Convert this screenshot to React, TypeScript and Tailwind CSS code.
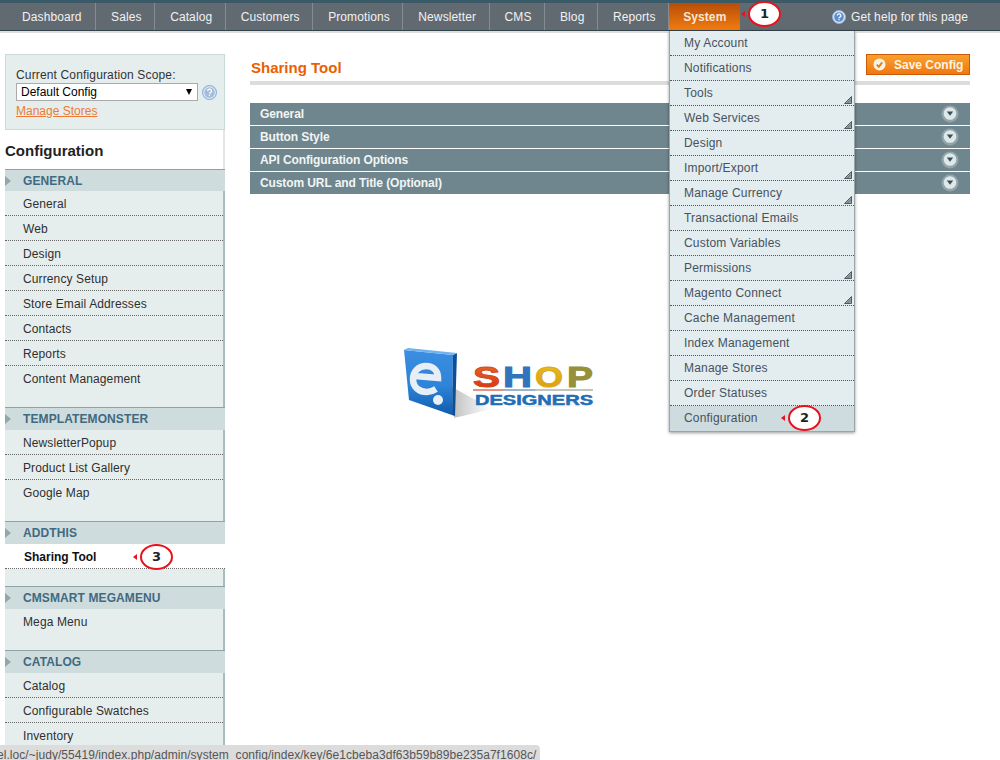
const navItems = ["Dashboard", "Sales", "Catalog", "Customers", "Promotions", "Newsletter", "CMS", "Blog", "Reports"];

const menuItems = [
  { label: "My Account" },
  { label: "Notifications" },
  { label: "Tools", sub: true },
  { label: "Web Services", sub: true },
  { label: "Design" },
  { label: "Import/Export", sub: true },
  { label: "Manage Currency", sub: true },
  { label: "Transactional Emails" },
  { label: "Custom Variables" },
  { label: "Permissions", sub: true },
  { label: "Magento Connect", sub: true },
  { label: "Cache Management" },
  { label: "Index Management" },
  { label: "Manage Stores" },
  { label: "Order Statuses" },
];

const panels = ["General", "Button Style", "API Configuration Options", "Custom URL and Title (Optional)"];

function HelpIcon({ size = 14, fill = "#6f9bd2" }: { size?: number; fill?: string }) {
  return (
    <svg width={size} height={size} viewBox="0 0 14 14" className="shrink-0">
      <circle cx="7" cy="7" r="6.5" fill="#dbe6f4" stroke="#8fb0d8" />
      <circle cx="7" cy="7" r="4.8" fill={fill} />
      <path d="M5.3 5.6a1.8 1.7 0 1 1 2.6 1.5c-.6.3-.9.6-.9 1.1" fill="none" stroke="#fff" strokeWidth="1.2" />
      <rect x="6.4" y="9" width="1.2" height="1.2" fill="#fff" />
    </svg>
  );
}

function Callout({ n, className }: { n: number; className: string }) {
  return (
    <div className={`absolute flex items-center ${className}`}>
      <span className="h-0 w-0 border-y-[3px] border-r-[4px] border-y-transparent border-r-[#e8121c]" />
      <span className="ml-[3px] flex h-[26px] w-[33px] items-center justify-center rounded-[50%] border-2 border-[#e8121c] bg-white text-[13px] font-bold text-[#222] font-['DejaVu_Sans',sans-serif]">
        {n}
      </span>
    </div>
  );
}

function SectionHead({ title, short }: { title: string; short?: boolean }) {
  return (
    <div
      className={`flex items-center border-t border-[#8ea3a8] bg-[#cfdcdd] text-xs font-bold tracking-[0.1px] text-[#3f6a80] ${
        short ? "h-[22px]" : "h-[23px]"
      }`}
    >
      <span className="h-0 w-0 border-y-[5px] border-l-[6px] border-y-transparent border-l-[#8fa8aa]" />
      <span className="ml-3">{title}</span>
    </div>
  );
}

function SideGroup({ title, items, filler, short }: { title: string; items: string[]; filler: string; short?: boolean }) {
  return (
    <div>
      <SectionHead title={title} short={short} />
      <div className="border-r-2 border-[#a9bcbd] bg-[#e6eeed] tracking-[0.12px]">
        {items.map((item, i) => (
          <div
            key={item}
            className={`flex h-[25px] items-center pl-[18px] pt-px text-[#2f2f2f] ${
              i === items.length - 1 ? "" : "border-b border-dotted border-[#666]"
            }`}
          >
            {item}
          </div>
        ))}
        <div className={filler} />
      </div>
    </div>
  );
}

function Logo() {
  return (
    <svg width="204" height="75" viewBox="0 0 204 75">
      <defs>
        <linearGradient id="cube" x1="0" y1="0" x2="0" y2="1">
          <stop offset="0" stopColor="#3c8ee2" />
          <stop offset="0.55" stopColor="#2d84d8" />
          <stop offset="1" stopColor="#0d5cae" />
        </linearGradient>
        <linearGradient id="shade" x1="0" y1="0" x2="1" y2="0">
          <stop offset="0" stopColor="#888" stopOpacity="0.55" />
          <stop offset="1" stopColor="#999" stopOpacity="0" />
        </linearGradient>
        <linearGradient id="letterS" x1="0" y1="0" x2="0" y2="1">
          <stop offset="0" stopColor="#e8702c" />
          <stop offset="1" stopColor="#d42c14" />
        </linearGradient>
        <linearGradient id="letterO" x1="0" y1="0" x2="0" y2="1">
          <stop offset="0" stopColor="#e8c02a" />
          <stop offset="1" stopColor="#d89a10" />
        </linearGradient>
      </defs>
      <path d="M52 42 L92 64 L54 73 Z" fill="url(#shade)" />
      <path d="M4 5 L53 10 L52 70 L9 55 Z" fill="url(#cube)" />
      <path d="M53 10 L57 8 L55 71 L52 70 Z" fill="#0c4f96" />
      <path d="M4 5 L8 3 L57 8 L53 10 Z" fill="#6fb2ee" />
      <path
        d="M15 31 L38 33 C38 25 33 21 26 21 C18 21 13 27 13 34 C13 43 20 47 27 47 C30 47 33 46 36 44"
        fill="none"
        stroke="#e8eef6"
        strokeWidth="6.5"
      />
      <circle cx="38" cy="55" r="5" fill="#e8eef6" />
      <g fontFamily="'Liberation Sans',Arial,sans-serif" fontWeight="700">
        <text x="73" y="42" fontSize="30" fill="url(#letterS)" stroke="#d8481c" strokeWidth="1" textLength="27" lengthAdjust="spacingAndGlyphs">S</text>
        <text x="103" y="42" fontSize="30" fill="#3274bc" stroke="#3274bc" strokeWidth="1" textLength="29" lengthAdjust="spacingAndGlyphs">H</text>
        <text x="135" y="42" fontSize="30" fill="url(#letterO)" stroke="#dcaa18" strokeWidth="1" textLength="28" lengthAdjust="spacingAndGlyphs">O</text>
        <text x="167" y="42" fontSize="30" fill="#96903a" stroke="#96903a" strokeWidth="1" textLength="26" lengthAdjust="spacingAndGlyphs">P</text>
        <text x="75" y="60" fontSize="14" fill="#1f6db6" stroke="#1f6db6" strokeWidth="0.5" textLength="118" lengthAdjust="spacingAndGlyphs">DESIGNERS</text>
      </g>
      <path d="M73 45 H104" stroke="#c9502c" strokeWidth="1.2" />
      <path d="M104 45 H135" stroke="#5c7fa8" strokeWidth="1.2" />
      <path d="M135 45 H193" stroke="#8a8a80" strokeWidth="1.2" />
      <path d="M118 62 L196 62 L204 54 L193 54 Z" fill="url(#shade)" opacity="0.35" />
    </svg>
  );
}

export default function App() {
  return (
    <div className="relative h-[760px] w-[1000px] overflow-hidden bg-white font-['Liberation_Sans',Arial,sans-serif] text-xs">
      <header className="h-[33px] border-b-2 border-[#dcdedd] bg-[#2f3f48]">
        <div className="flex h-[31px] items-stretch border-t-[3px] border-b border-t-[#3b5a68] border-b-[#33434b] bg-[#626a71] pl-[8px] tracking-[0.1px] text-[#f0f2f2]">
          {navItems.map((item, i) => (
            <div key={item} className={`flex items-center border-r border-[#858b90] ${i === 0 ? "pl-[14px] pr-[13.5px]" : "pl-[15px] pr-[12.5px]"}`}>
              {item}
            </div>
          ))}
          <div className="flex w-[71px] items-center bg-gradient-to-b from-[#b84d08] to-[#f07c10] pl-[14px] font-bold text-[#f6e8d8]">
            System
          </div>
          <div className="ml-auto flex items-center gap-[5px] pr-[32px]">
            <HelpIcon fill="#5f8fca" />
            Get help for this page
          </div>
        </div>
      </header>

      <div className="flex items-start pl-[5px] pt-[21px]">
        <aside className="w-[220px] shrink-0">
          <div className="h-[76px] border border-[#c9d8d8] bg-[#e6eeed] pl-[10px] pt-[13px] text-[#333]">
            <div className="leading-[15px] tracking-[0.15px]">Current Configuration Scope:</div>
            <div className="flex items-center gap-[4px]">
              <div className="flex h-[18px] w-[182px] items-center justify-between border border-[#aaa] bg-white pl-[4px] pr-[5px] text-black">
                Default Config
                <span className="h-0 w-0 border-x-[3.5px] border-t-[6px] border-x-transparent border-t-black" />
              </div>
              <HelpIcon size={15} fill="#a3bcd9" />
            </div>
            <div className="mt-[2px] text-[#ee7a33] underline">Manage Stores</div>
          </div>
          <div className="flex h-[39px] items-center border-r-2 border-[#e4e6e6] pt-[2px] text-[15px] font-bold text-[#222]">
            Configuration
          </div>
          <SideGroup
            title="GENERAL"
            short
            items={["General", "Web", "Design", "Currency Setup", "Store Email Addresses", "Contacts", "Reports", "Content Management"]}
            filler="h-[16px]"
          />
          <SideGroup title="TEMPLATEMONSTER" items={["NewsletterPopup", "Product List Gallery", "Google Map"]} filler="h-[16px]" />
          <SectionHead title="ADDTHIS" />
          <div className="flex h-[25px] items-center border-b border-dotted border-[#666] bg-white pl-[19px] pt-px font-bold text-[#111]">
            Sharing Tool
          </div>
          <div className="h-[17px] border-r-2 border-[#a9bcbd] bg-[#e6eeed]" />
          <SideGroup title="CMSMART MEGAMENU" items={["Mega Menu"]} filler="h-[16px]" />
          <SideGroup title="CATALOG" items={["Catalog", "Configurable Swatches", "Inventory"]} filler="h-[16px]" />
        </aside>

        <main className="ml-[25px] w-[720px] shrink-0">
          <div className="flex h-[31px] items-start justify-between border-b-[4px] border-[#dcdcdc]">
            <h1 className="ml-px mt-[4px] text-[15px] font-bold leading-[20px] text-[#eb5e00]">Sharing Tool</h1>
            <button className="flex h-[21px] w-[104px] items-center gap-[8px] border border-[#c85a08] bg-gradient-to-b from-[#f8a02c] to-[#f07810] pl-[6px] font-bold text-[#fff4e4]">
              <svg width="13" height="13" viewBox="0 0 13 13" className="shrink-0">
                <circle cx="6.5" cy="6.5" r="6" fill="#fdf2e0" />
                <path d="M3.8 6.6 L5.8 8.8 L9.2 4.4" fill="none" stroke="#e87a10" strokeWidth="1.8" />
              </svg>
              Save Config
            </button>
          </div>
          <div className="mt-[18px] flex flex-col gap-px">
            {panels.map((panel) => (
              <div key={panel} className="flex h-[22px] items-center justify-between bg-[#6f868e] pl-[10px] pr-[11px] font-bold tracking-[-0.1px] text-[#f2f5f5]">
                {panel}
                <svg width="18" height="18" viewBox="0 0 18 18">
                  <circle cx="9" cy="9" r="8.5" fill="#93a5aa" />
                  <circle cx="9" cy="8.5" r="6.3" fill="#dfe8e9" />
                  <path d="M5.8 6.5 H12.2 L9 10.8 Z" fill="#34505f" />
                </svg>
              </div>
            ))}
          </div>
          <div className="ml-[150px] mt-[151px]">
            <Logo />
          </div>
        </main>
      </div>

      <nav className="absolute left-[669px] top-[31px] w-[186px] border-x border-b border-[#9aa5a8] bg-[#e3ecee] tracking-[0.18px] text-[#46525e] shadow-[0_1px_3px_rgba(0,0,0,0.4)]">
        {menuItems.map((item) => (
          <div key={item.label} className="relative flex h-[25px] items-center border-b border-dotted border-[#555] pl-[14px]">
            {item.label}
            {item.sub && (
              <svg width="8" height="8" viewBox="0 0 8 8" className="absolute bottom-[1px] right-[2px]">
                <path d="M0.5 7.5 L7.5 0.5 V7.5 Z" fill="#9aa6ab" stroke="#4d5a60" strokeWidth="1" />
                <path d="M3.5 7 L7 3.5" stroke="#4d5a60" strokeWidth="0.8" />
              </svg>
            )}
          </div>
        ))}
        <div className="flex h-[25px] items-center bg-[#cfdcdf] pb-px pl-[14px]">Configuration</div>
      </nav>

      <Callout n={1} className="left-[741px] top-[1px]" />
      <Callout n={2} className="left-[781px] top-[405px]" />
      <Callout n={3} className="left-[133px] top-[544px]" />

      <div className="absolute bottom-0 left-0 flex h-[15px] w-[540px] items-start overflow-hidden whitespace-nowrap rounded-tr-[4px] bg-[#dcdcdc] pt-[2px] tracking-[0.05px] text-[#555]">
        <span className="-ml-[3px]">el.loc/~judy/55419/index.php/admin/system_config/index/key/6e1cbeba3df63b59b89be235a7f1608c/</span>
      </div>
    </div>
  );
}
